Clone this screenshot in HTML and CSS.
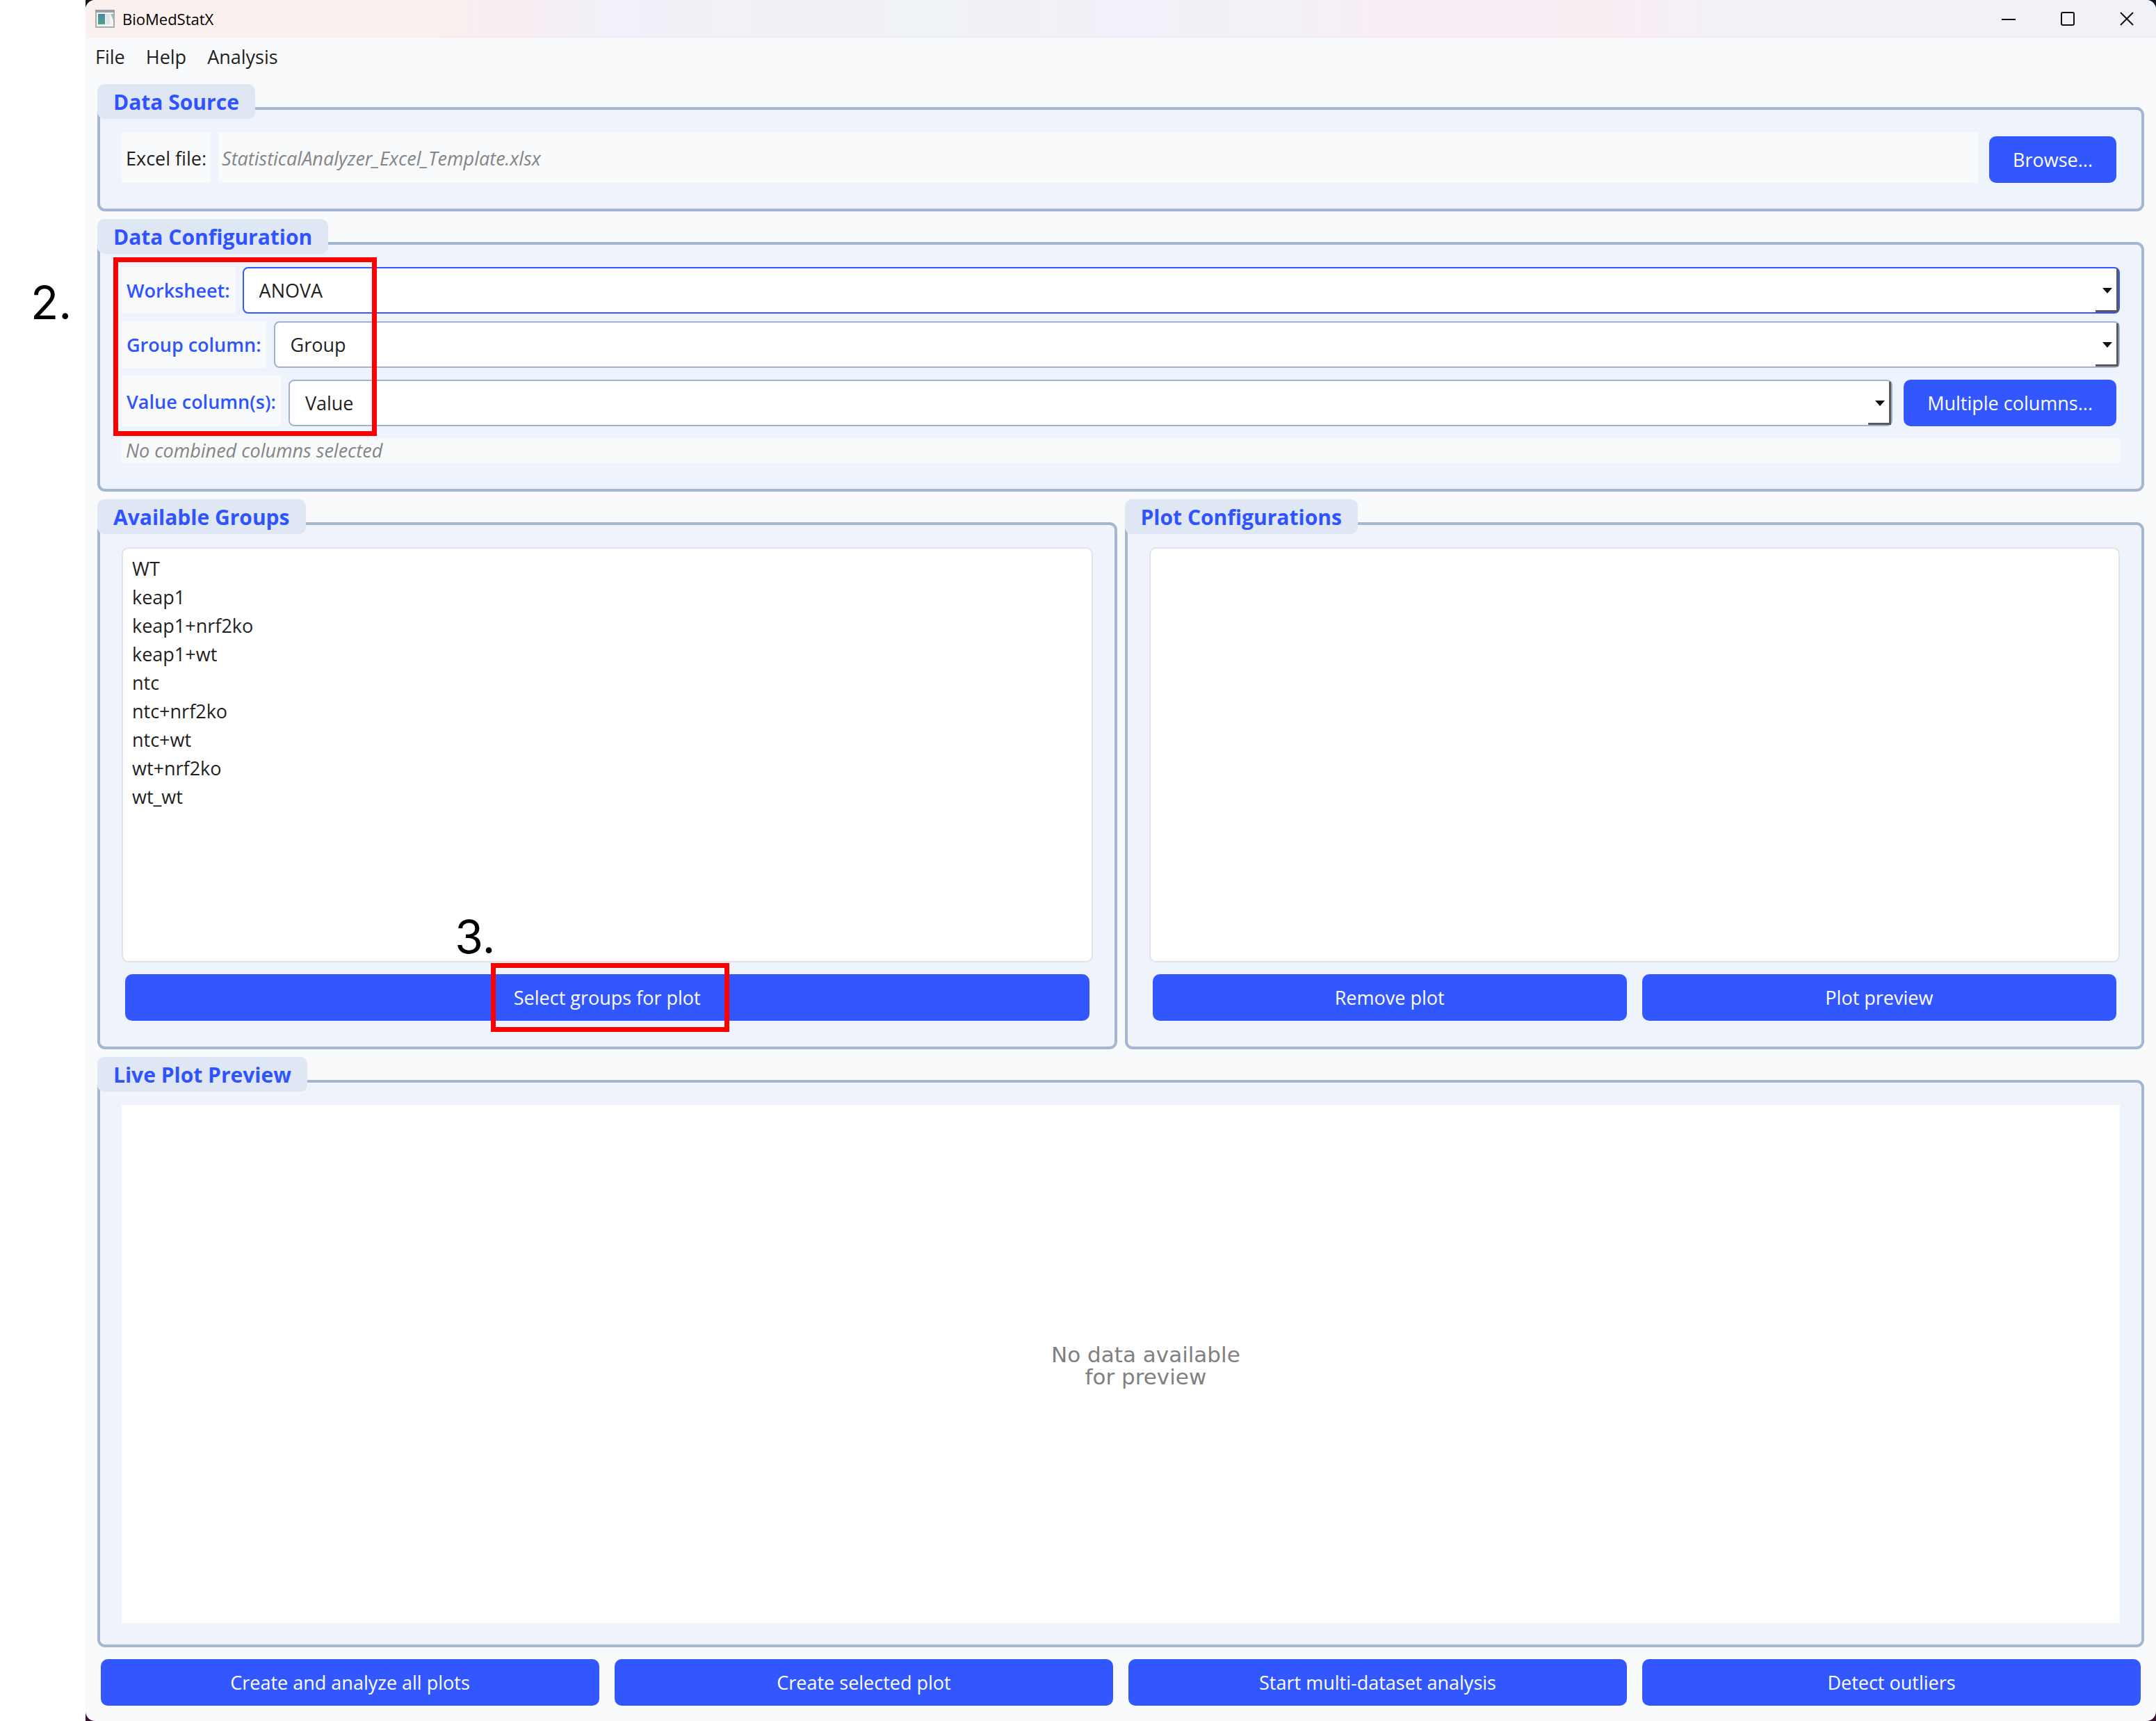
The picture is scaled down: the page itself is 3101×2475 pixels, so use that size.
FILE: index.html
```html
<!DOCTYPE html>
<html lang="en">
<head>
<meta charset="utf-8">
<title>BioMedStatX</title>
<link rel="stylesheet" href="styles.css">
</head>
<body>
<div class="backdrop">
<div class="window">
  <header class="titlebar">
    <svg class="app-icon" viewBox="0 0 28 26" aria-hidden="true">
      <defs><linearGradient id="pane" x1="0" y1="0" x2="0" y2="1"><stop offset="0" stop-color="#4a86a8"/><stop offset="1" stop-color="#4fa67c"/></linearGradient></defs>
      <rect x="1" y="1" width="26" height="24" fill="#f4f5f6" stroke="#a9adb3" stroke-width="2"/>
      <rect x="0" y="0" width="28" height="4" fill="#9a9ea6"/>
      <rect x="4" y="6" width="10" height="15" fill="url(#pane)"/>
      <rect x="15" y="6" width="6" height="15" fill="#e3e5e8"/>
      <path d="M22 6h4v9z" fill="#8fc7b4"/>
    </svg>
    <span class="app-name">BioMedStatX</span>
    <div class="window-controls">
      <button type="button" aria-label="Minimize"><svg viewBox="0 0 20 20"><path d="M0 11h20"/></svg></button>
      <button type="button" aria-label="Maximize"><svg viewBox="0 0 20 20"><rect x="1" y="1" width="18" height="18" rx="2"/></svg></button>
      <button type="button" aria-label="Close"><svg viewBox="0 0 20 20"><path d="M1 1l18 18M19 1L1 19"/></svg></button>
    </div>
  </header>
  <nav class="menubar">
    <button type="button">File</button>
    <button type="button">Help</button>
    <button type="button">Analysis</button>
  </nav>
  <main class="content">
    <section class="panel">
      <h2>Data Source</h2>
      <div class="panel-body">
        <div class="row with-button">
          <span class="plain-label">Excel file:</span>
          <span class="file-name">StatisticalAnalyzer_Excel_Template.xlsx</span>
          <button type="button" class="action">Browse...</button>
        </div>
      </div>
    </section>

    <section class="panel">
      <h2>Data Configuration</h2>
      <div class="panel-body fields">
        <div class="row">
          <label for="worksheet">Worksheet:</label>
          <div class="combo active"><select id="worksheet"><option>ANOVA</option></select></div>
        </div>
        <div class="row">
          <label for="group">Group column:</label>
          <div class="combo"><select id="group"><option>Group</option></select></div>
        </div>
        <div class="row with-button">
          <label for="value">Value column(s):</label>
          <div class="combo"><select id="value"><option>Value</option></select></div>
          <button type="button" class="action">Multiple columns...</button>
        </div>
        <p class="hint">No combined columns selected</p>
      </div>
      <div class="mark mark-fields"></div>
      <span class="step step-two">2.</span>
    </section>

    <div class="columns">
      <section class="panel">
        <h2>Available Groups</h2>
        <div class="panel-body">
          <ul class="list">
            <li>WT</li>
            <li>keap1</li>
            <li>keap1+nrf2ko</li>
            <li>keap1+wt</li>
            <li>ntc</li>
            <li>ntc+nrf2ko</li>
            <li>ntc+wt</li>
            <li>wt+nrf2ko</li>
            <li>wt_wt</li>
          </ul>
          <div class="buttons">
            <button type="button" class="action">Select groups for plot
              <span class="mark mark-select"></span>
              <span class="step step-three">3.</span>
            </button>
          </div>
        </div>
      </section>
      <section class="panel">
        <h2>Plot Configurations</h2>
        <div class="panel-body">
          <ul class="list"></ul>
          <div class="buttons">
            <button type="button" class="action">Remove plot</button>
            <button type="button" class="action">Plot preview</button>
          </div>
        </div>
      </section>
    </div>

    <section class="panel">
      <h2>Live Plot Preview</h2>
      <div class="panel-body">
        <div class="canvas"><p>No data available<br>for preview</p></div>
      </div>
    </section>

    <div class="buttons footer">
      <button type="button" class="action">Create and analyze all plots</button>
      <button type="button" class="action">Create selected plot</button>
      <button type="button" class="action">Start multi-dataset analysis</button>
      <button type="button" class="action">Detect outliers</button>
    </div>
  </main>
</div>
</div>
</body>
</html>
```
FILE: styles.css
```css
* { box-sizing: border-box; }

body {
  margin: 0;
  padding-left: 123px;
  background: #fff;
  color: #1f1f1f;
  font: 27px/36px "Open Sans", "Noto Sans", sans-serif;
}

h2, p, ul { margin: 0; padding: 0; }
button, select { font: inherit; color: inherit; }

.backdrop { background: linear-gradient(#101820, #3a1030); }

.window {
  display: flex;
  flex-direction: column;
  min-height: 100vh;
  border-radius: 14px;
  background: #f8fafc;
}

/* Title bar and menu */
.titlebar {
  display: flex;
  align-items: center;
  height: 55px;
  padding: 0 0 2px 14px;
  border-radius: 14px 14px 0 0;
  background: linear-gradient(90deg, #faf1ee 0%, #faf0ee 17%, #f8edf1 20%, #f2f0f8 25%, #eff2f7 41%, #f2f0f8 50%, #f3f0f7 58%, #f9edf5 64%, #f9edf4 74%, #f2f1f8 80%);
}
.app-icon { width: 28px; height: 26px; }
.app-name { margin-left: 11px; color: #000; font-size: 22px; }
.window-controls { display: flex; margin-left: auto; }
.window-controls button {
  display: grid;
  place-items: center;
  width: 85px;
  height: 53px;
  padding: 0;
  border: 0;
  background: none;
}
.window-controls svg { width: 20px; height: 20px; fill: none; stroke: #111; stroke-width: 2; }

.menubar { display: flex; gap: 30px; padding: 9px 14px; }
.menubar button { padding: 0; border: 0; background: none; }

/* Panels */
.content {
  flex: 1;
  display: grid;
  grid-template-columns: minmax(0, 1fr);
  grid-template-rows: auto auto 14fr 15fr auto;
  padding: 12px 17px 22px;
}
.panel {
  position: relative;
  display: flex;
  flex-direction: column;
  min-width: 0;
  margin-top: 33px;
  margin-bottom: 11px;
  border: 4px solid #a3b6d2;
  border-radius: 11px;
  background: #eff3fb;
}
.panel h2 {
  align-self: flex-start;
  margin: -37px 0 0 -4px;
  padding: 6px 23px 4px;
  border-radius: 10px;
  background: #dfe6f4;
  color: #2f54ff;
  font-size: 30px;
  line-height: 40px;
  font-weight: 700;
}
.panel-body {
  flex: 1;
  display: flex;
  flex-direction: column;
  padding: 19px 31px 31px;
}
.columns { display: grid; grid-template-columns: 1fr 1fr; gap: 11px; }

/* Rows of fields */
.fields { gap: 11px; }
.row { display: flex; align-items: stretch; gap: 11px; }
.row label, .plain-label, .file-name {
  display: flex;
  align-items: center;
  padding: 0 6px;
  background: #f8fafc;
}
.row label { padding: 0 7px; color: #2f54ff; font-weight: 600; }
.with-button label, .plain-label, .file-name { margin-bottom: 6px; padding-top: 2px; }
.file-name { flex: 1; padding-left: 5px; }
.file-name, .hint { color: #858585; font-style: italic; }
.with-button .combo { margin: 6px 0; }
.hint { margin-bottom: 6px; padding: 0 6px; background: #f8fafc; }

.combo { position: relative; flex: 1; height: 67px; }
.combo select {
  appearance: none;
  width: 100%;
  height: 100%;
  padding: 0 22px;
  border: 2px solid #9fb3d1;
  border-radius: 8px;
  background: #fff;
}
.combo.active select { border-color: #3457ff; }
.combo::before {
  content: "";
  position: absolute;
  top: 3px;
  right: 2px;
  bottom: 2px;
  width: 30px;
  border: solid #5a5a5a;
  border-width: 0 3px 3px 0;
}
.combo::after {
  content: "";
  position: absolute;
  top: 30px;
  right: 11px;
  border: solid transparent;
  border-width: 8px 7px 0;
  border-top-color: #111;
}

/* Buttons */
.action {
  position: relative;
  height: 67px;
  margin: 6px 5px;
  padding: 0 34px;
  border: 0;
  border-radius: 10px;
  background: #3357ff;
  color: #fff;
  font-weight: 500;
}
.buttons { display: grid; grid-auto-flow: column; grid-auto-columns: 1fr; gap: 12px; margin-top: 11px; }
.footer { margin-top: 0; }
.footer .action { margin-bottom: 0; }

/* Lists and preview */
.list {
  flex: 1;
  padding: 8px 13px;
  border: 2px solid #e1e3e6;
  border-radius: 10px;
  background: #fff;
  list-style: none;
  line-height: 41px;
}
.canvas {
  flex: 1;
  display: grid;
  grid-template-rows: 12fr 77fr 11fr;
  padding: 0 10% 0 12.5%;
  background: #fff;
}
.canvas p {
  grid-row: 2;
  align-self: center;
  padding-bottom: 3px;
  color: #808080;
  font: 31px/32px "DejaVu Sans", sans-serif;
  text-align: center;
}

/* Tutorial marks */
.mark { position: absolute; border: 7px solid #f00; }
.mark-fields { top: 18px; left: 19px; width: 379px; height: 257px; }
.mark-select { top: -16px; left: 50%; width: 343px; height: 99px; margin-left: -167px; }
.step { position: absolute; color: #000; font: 400 66px/66px Inter, sans-serif; }
.step-two { top: 50px; left: -100px; }
.step-three { top: -87px; left: 50%; margin-left: -219px; }
```
